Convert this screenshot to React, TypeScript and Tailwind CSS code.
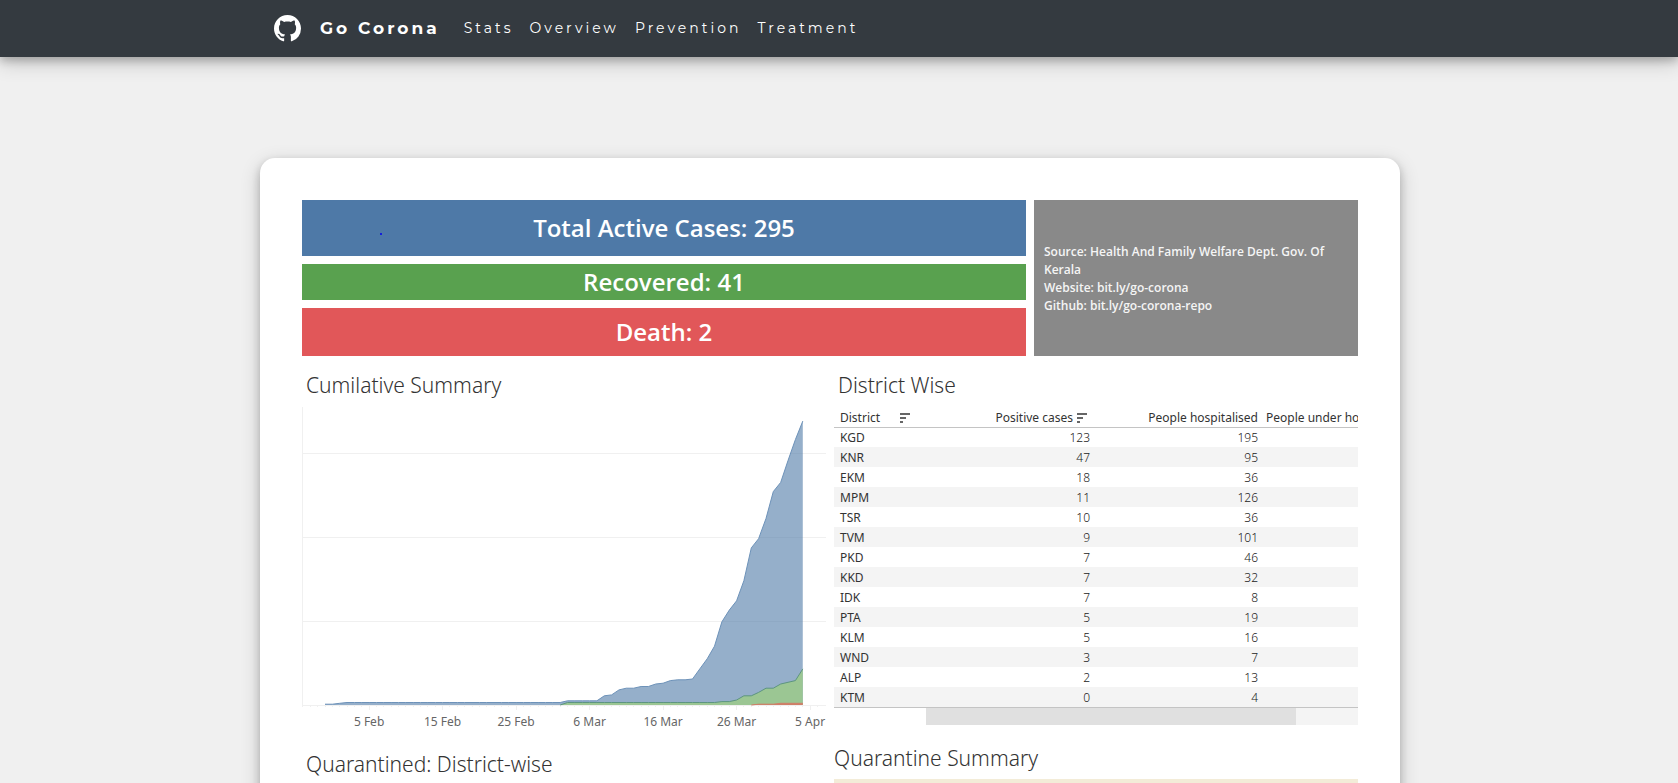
import React from "react";

const NAV_LINKS = ["Stats", "Overview", "Prevention", "Treatment"];

const DISTRICTS: [string, number, number][] = [
  ["KGD", 123, 195],
  ["KNR", 47, 95],
  ["EKM", 18, 36],
  ["MPM", 11, 126],
  ["TSR", 10, 36],
  ["TVM", 9, 101],
  ["PKD", 7, 46],
  ["KKD", 7, 32],
  ["IDK", 7, 8],
  ["PTA", 5, 19],
  ["KLM", 5, 16],
  ["WND", 3, 7],
  ["ALP", 2, 13],
  ["KTM", 0, 4],
];

// One value per day, starting on 30 January.
const CONFIRMED = [
  1, 1, 2, ...Array(30).fill(3), 5, 5, 5, 5, 5, 11, 12, 18, 20, 20, 22, 22, 25, 26, 29, 30, 30, 31, 43, 55, 70, 99,
  113, 124, 148, 187, 198, 222, 254, 265, 291, 316, 338,
];
const RECOVERED = [...Array(33).fill(0), ...Array(21).fill(3), 4, 4, 6, 11, 11, 15, 20, 20, 25, 27, 29, 43];
const DEATHS = [...Array(59).fill(0), 1, 1, 1, 2, 2, 2, 2];
const TICKS = ["5 Feb", "15 Feb", "25 Feb", "6 Mar", "16 Mar", "26 Mar", "5 Apr"];

const BASE = 299;
const dayX = (day: number) => 23 + day * 7.35;
const valueY = (value: number) => BASE - value * 0.84;

function linePoints(values: number[], from = 0) {
  return values
    .map((v, i) => [i, v])
    .slice(from)
    .map(([i, v]) => `${dayX(i).toFixed(1)},${valueY(v).toFixed(1)}`)
    .join(" ");
}

function areaPoints(values: number[], from = 0) {
  return `${dayX(from)},${BASE} ${linePoints(values, from)} ${dayX(values.length - 1)},${BASE}`;
}

function GithubMark() {
  return (
    <svg viewBox="0 0 16 16" className="size-[27px] fill-white" aria-hidden="true">
      <path d="M8 0C3.58 0 0 3.58 0 8c0 3.54 2.29 6.53 5.47 7.59.4.07.55-.17.55-.38 0-.19-.01-.82-.01-1.49-2.01.37-2.53-.49-2.69-.94-.09-.23-.48-.94-.82-1.13-.28-.15-.68-.52-.01-.53.63-.01 1.08.58 1.23.82.72 1.21 1.87.87 2.33.66.07-.52.28-.87.51-1.07-1.78-.2-3.64-.89-3.64-3.95 0-.87.31-1.59.82-2.15-.08-.2-.36-1.02.08-2.12 0 0 .67-.21 2.2.82.64-.18 1.32-.27 2-.27s1.36.09 2 .27c1.53-1.04 2.2-.82 2.2-.82.44 1.1.16 1.92.08 2.12.51.56.82 1.27.82 2.15 0 3.07-1.87 3.75-3.65 3.95.29.25.54.73.54 1.48 0 1.07-.01 1.93-.01 2.2 0 .21.15.46.55.38A8.01 8.01 0 0 0 16 8c0-4.42-3.58-8-8-8z" />
    </svg>
  );
}

function SortIcon() {
  return (
    <svg viewBox="0 0 10 10" className="size-[10px] fill-[#666]" aria-hidden="true">
      <path d="M0 0h10v2H0zM0 4h6v2H0zM0 8h3v2H0z" />
    </svg>
  );
}

function CumulativeChart() {
  return (
    <svg viewBox="0 0 524 326" className="block w-full" role="img" aria-label="Cumilative Summary">
      <g stroke="#f0f0f0" strokeWidth="1" shapeRendering="crispEdges">
        {[100, 200, 300].map((v) => (
          <line key={v} x1="0" x2="524" y1={valueY(v) + 0.5} y2={valueY(v) + 0.5} />
        ))}
        <line x1="0.5" x2="0.5" y1="1" y2={BASE} />
        <line x1="0" x2="524" y1={BASE + 0.5} y2={BASE + 0.5} />
        {TICKS.map((t, i) => (
          <line key={t} x1={dayX(6 + i * 10)} x2={dayX(6 + i * 10)} y1={BASE} y2={BASE + 5} />
        ))}
        {Array.from({ length: 71 }, (_, i) => (
          <line key={i} x1={dayX(i - 3)} x2={dayX(i - 3)} y1={BASE} y2={BASE + 2} />
        ))}
      </g>
      <polygon points={areaPoints(CONFIRMED)} fill="#4e79a7" fillOpacity="0.6" />
      <polyline points={linePoints(CONFIRMED)} fill="none" stroke="#6d92b9" strokeWidth="1" />
      <polygon points={areaPoints(RECOVERED, 32)} fill="#9bc693" />
      <polyline points={linePoints(RECOVERED, 32)} fill="none" stroke="#5d9580" strokeWidth="1" />
      <polygon points={areaPoints(DEATHS, 58)} fill="#cf7f68" />
      <polyline points={linePoints(DEATHS, 58)} fill="none" stroke="#cf7f68" strokeWidth="1" />
      {TICKS.map((t, i) => (
        <text key={t} x={dayX(6 + i * 10)} y="320" textAnchor="middle" className="fill-[#666] text-[12px]">
          {t}
        </text>
      ))}
    </svg>
  );
}

function DistrictTable() {
  const head = "h-[22px] p-0 pt-1 font-normal leading-[18px] whitespace-nowrap";
  return (
    <div className="overflow-hidden">
      <table className="w-[692px] table-fixed border-separate border-spacing-0 text-[12px] leading-[18px] text-[#333]">
        <colgroup>
          <col className="w-[88px]" />
          <col className="w-[168px]" />
          <col className="w-[168px]" />
          <col />
        </colgroup>
        <thead>
          <tr>
            <th className={`${head} pl-[6px] text-left`}>
              <span className="flex items-center gap-5">
                District <SortIcon />
              </span>
            </th>
            <th className={`${head} pr-[3px]`}>
              <span className="flex items-center justify-end gap-1">
                Positive cases <SortIcon />
              </span>
            </th>
            <th className={`${head} text-right`}>People hospitalised</th>
            <th className={`${head} pl-2 text-left`}>People under home isolation</th>
          </tr>
        </thead>
        <tbody className="[&_td]:border-t [&_td]:border-transparent [&_td]:p-0 [&_td]:pt-px [&>tr:first-child>td]:border-[#c4c4c4]">
          {DISTRICTS.map(([name, positive, hospitalised]) => (
            <tr key={name} className="even:bg-[#f4f4f4]">
              <td>
                <span className="pl-[6px]">{name}</span>
              </td>
              <td className="text-right font-light text-[#222]">{positive}</td>
              <td className="text-right font-light text-[#222]">{hospitalised}</td>
              <td />
            </tr>
          ))}
        </tbody>
      </table>
      <div className="border-t border-[#c4c4c4]">
        <div className="ml-[92px] h-[17px] bg-[#f4f4f4]">
          <div className="h-full w-[370px] bg-[#e0e0e0]" />
        </div>
      </div>
    </div>
  );
}

const SHADOW = "shadow-[0_4px_8px_0_rgba(0,0,0,0.2),0_6px_20px_0_rgba(0,0,0,0.19)]";
const BAR = "flex items-center justify-center font-['Open_Sans',sans-serif] font-semibold text-[24px] leading-8";
const TITLE = "text-[21px] leading-7 font-light text-[#333]";

export default function App() {
  return (
    <div className="flex h-screen flex-col bg-[#f0f0f0] font-['Noto_Sans','Open_Sans',sans-serif]">
      <header className={`relative z-10 shrink-0 bg-[#343a40] pr-[18px] ${SHADOW}`}>
        <nav className="mx-auto flex h-[57px] max-w-[1140px] items-center px-[14px] font-['Montserrat','Inter',sans-serif] text-white">
          <a href="#github" aria-label="GitHub" className="mr-[19px]">
            <GithubMark />
          </a>
          <a href="#home" className="mr-6 text-[17px] font-bold tracking-[3px]">
            Go Corona
          </a>
          <ul className="flex gap-4 text-[14px] tracking-[3px]">
            {NAV_LINKS.map((label) => (
              <li key={label}>
                <a href={`#${label.toLowerCase()}`}>{label}</a>
              </li>
            ))}
          </ul>
        </nav>
      </header>

      <main className="flex-1 overflow-y-auto pt-[101px] pr-[18px] [scrollbar-width:none]">
        <div className={`mx-auto max-w-[1140px] rounded-[15px] bg-white p-[42px] ${SHADOW}`}>
          <section className="grid grid-cols-[minmax(0,1fr)_324px] gap-2 text-white">
            <div className="flex flex-col gap-2">
              <div className={`${BAR} relative h-14 bg-[#4e79a7]`}>
                Total Active Cases: 295
                <span className="absolute top-[33px] left-[78px] size-[2px] rounded-full bg-[#0000ee]" />
              </div>
              <div className={`${BAR} h-9 bg-[#59a14f]`}>Recovered: 41</div>
              <div className={`${BAR} h-12 bg-[#e15759]`}>Death: 2</div>
            </div>
            <div className="flex flex-col justify-center bg-[#898989] px-[10px] pt-[2px] font-['Open_Sans',sans-serif] text-[12px] leading-[18px] font-semibold text-[#f5f5f5]">
              <p>Source: Health And Family Welfare Dept. Gov. Of Kerala</p>
              <p>Website: bit.ly/go-corona</p>
              <p>Github: bit.ly/go-corona-repo</p>
            </div>
          </section>

          <section className="mt-[15px] grid grid-cols-2 gap-2">
            <div>
              <h2 className={`${TITLE} pl-1`}>Cumilative Summary</h2>
              <div className="mt-[7px]">
                <CumulativeChart />
              </div>
              <h2 className={`${TITLE} mt-[18px] pl-1`}>Quarantined: District-wise</h2>
              <div className="h-[200px]" />
            </div>
            <div>
              <h2 className={`${TITLE} mb-[6px] pl-1`}>District Wise</h2>
              <DistrictTable />
              <h2 className={`${TITLE} mt-[19px]`}>Quarantine Summary</h2>
              <div className="mt-[7px] h-[200px] bg-[#f3ecd8]" />
            </div>
          </section>
        </div>
      </main>
    </div>
  );
}
